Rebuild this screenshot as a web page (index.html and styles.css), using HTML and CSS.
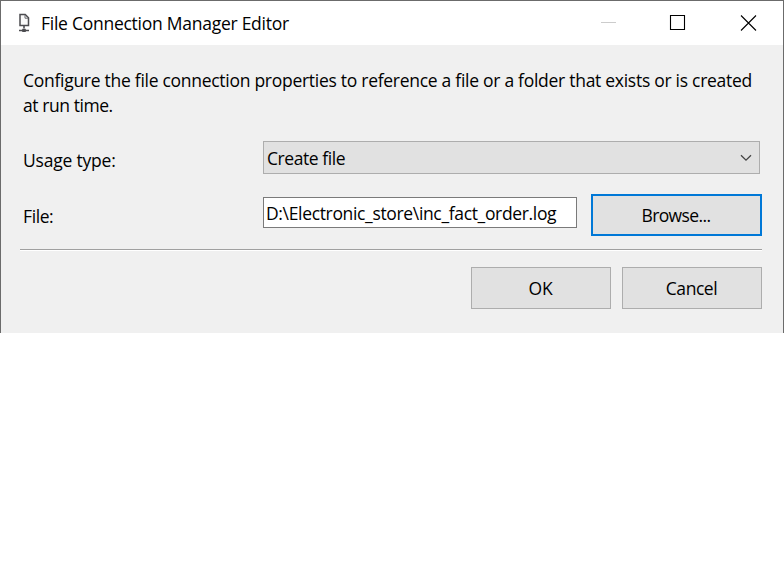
FILE: index.html
```html
<!DOCTYPE html>
<html lang="en">
<head>
<meta charset="utf-8">
<title>File Connection Manager Editor</title>
<link rel="stylesheet" href="styles.css">
</head>
<body>
<main class="dialog">
  <header class="titlebar">
    <svg class="app-icon" width="14" height="20" viewBox="0 0 14 20" fill="none">
      <path d="M3 1.5h5.2l3.3 3.3v7.7H3z" fill="#fafafa" stroke="#4c4c50" stroke-width="1.5"/>
      <path d="M8 1.8v3.4h3.2" stroke="#6a6a6e"/>
      <path d="M7 12.5v3M2 17.5h10" stroke="#4c4c50" stroke-width="1.6"/>
      <path d="M5.2 15.8h3.6v3.2H5.2z" fill="#4c4c50"/>
    </svg>
    <h1 class="title"><span class="t-title">File Connection Manager Editor</span></h1>
    <svg class="controls" width="160" height="16" viewBox="0 0 160 16" fill="none">
      <path d="M0 7.5h15" stroke="#ccc"/>
      <path d="M69.5.5h14v14h-14z" stroke="#000" stroke-width="1.1"/>
      <path d="M140 .5l15 15M155 .5l-15 15" stroke="#000" stroke-width="1.1"/>
    </svg>
  </header>
  <section class="content">
    <p class="intro"><span class="t-intro">Configure the file connection properties to reference a file or a folder that exists or is created</span><br><span class="t-intro2">at run time.</span></p>
    <div class="row usage">
      <span class="label"><span class="t-usage">Usage type:</span></span>
      <div class="select"><span class="t-create">Create file</span>
        <svg width="12" height="8" viewBox="0 0 12 8" fill="none"><path d="M1 1.2l5 5 5-5" stroke="#444" stroke-width="1.3"/></svg>
      </div>
    </div>
    <div class="row file">
      <span class="label"><span class="t-file">File:</span></span>
      <div class="field"><span class="t-path">D:\Electronic_store\inc_fact_order.log</span></div>
      <button class="button browse"><span class="t-browse">Browse...</span></button>
    </div>
    <hr class="separator">
    <footer class="actions">
      <button class="button"><span class="t-ok">OK</span></button>
      <button class="button"><span class="t-cancel">Cancel</span></button>
    </footer>
  </section>
</main>
</body>
</html>
```
FILE: styles.css
```css
* { box-sizing: border-box; }
body {
  margin: 0;
  background: #fff;
  color: #000;
  font: 17.5px/25px "Open Sans", "Noto Sans", sans-serif;
}
.dialog {
  width: 784px;
  height: 333px;
  border: 1px solid #6b6b6b;
  border-bottom: 0;
  background: #f0f0f0;
}
.titlebar {
  display: flex;
  align-items: center;
  height: 44px;
  padding-left: 16px;
  background: #fff;
}
.app-icon { margin-right: 10px; }
.title { margin: 0; font: inherit; flex: 1; white-space: nowrap; }
.controls { margin-right: 22px; }
.content { padding: 23px 21px 0 19px; }
.intro { margin: 0 0 0 3px; white-space: nowrap; }
.row { display: flex; }
.label { width: 241px; padding-left: 3px; white-space: nowrap; }
.usage { margin-top: 23px; height: 33px; }
.usage .label { padding-top: 7px; }
.select {
  display: flex;
  align-items: center;
  justify-content: space-between;
  width: 497px;
  margin-left: 2px;
  padding: 1px 7px 0 3px;
  height: 33px;
  background: #e1e1e1;
  border: 1px solid #adadad;
}
.file { margin-top: 20px; height: 42px; }
.file .label { padding-top: 10px; }
.field {
  width: 314px;
  height: 31px;
  margin: 3px 14px 0 2px;
  padding: 3px 0 0 2px;
  background: #fff;
  border: 1px solid #7a7a7a;
  white-space: nowrap;
}
.button {
  width: 140px;
  height: 42px;
  padding: 0 1px 0 0;
  background: #e1e1e1;
  border: 1px solid #adadad;
  color: inherit;
  font: inherit;
}
.browse { width: 171px; border: 2px solid #0078d7; }
.separator {
  height: 2px;
  margin: 13px 0 0;
  border: 0;
  border-top: 1px solid #a0a0a0;
  background: #fff;
}
.actions { display: flex; justify-content: flex-end; gap: 11px; margin-top: 16px; }
.t-title { letter-spacing: -0.26px; }
.t-intro { letter-spacing: -0.28px; }
.t-intro2, .t-create { letter-spacing: -0.43px; }
.t-usage, .t-ok { letter-spacing: -0.2px; }
.t-file { letter-spacing: -0.4px; }
.t-path { letter-spacing: -0.34px; }
.t-browse { letter-spacing: -0.6px; }
.t-cancel { letter-spacing: -0.45px; }
```
